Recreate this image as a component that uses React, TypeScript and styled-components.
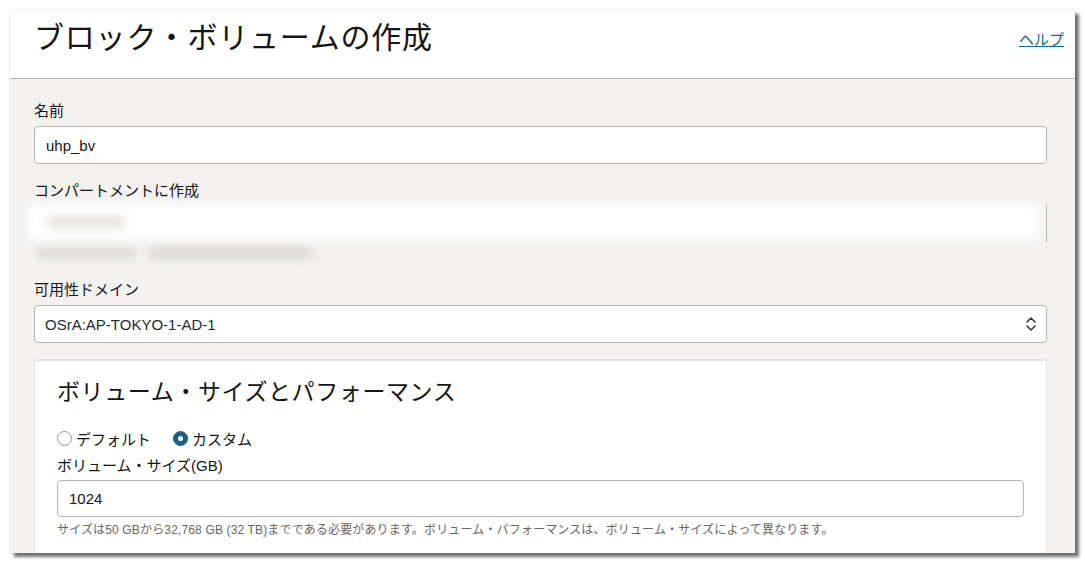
import * as React from "react";
import styled, { createGlobalStyle } from "styled-components";

const GlobalStyle = createGlobalStyle`
  html, body {
    margin: 0;
    padding: 0;
    background: #ffffff;
  }
  body {
    font-family: "Liberation Sans", "Noto Sans CJK JP", sans-serif;
    color: #161513;
  }
`;

const Page = styled.div`
  padding: 10px 0 0 10px;
  width: 1085px;
  height: 565px;
  box-sizing: border-box;
  overflow: hidden;
`;

const Window = styled.div`
  width: 1065px;
  height: 543px;
  background: #f3f2f1;
  overflow: hidden;
  box-shadow: 0 0 2px rgba(0, 0, 0, 0.18), 4px 4px 3px rgba(0, 0, 0, 0.55);
  display: flex;
  flex-direction: column;
`;

const Header = styled.header`
  height: 69px;
  flex: none;
  box-sizing: border-box;
  background: #ffffff;
  border-bottom: 1px solid #bcb8b2;
  display: flex;
  align-items: center;
  justify-content: space-between;
  padding: 0 11px 12px 24px;
`;

const Title = styled.h1`
  margin: 0;
  font-size: 30px;
  font-weight: 400;
  line-height: 36px;
  letter-spacing: 0.8px;
`;

const HelpLink = styled.a`
  font-size: 15px;
  color: #0f6a99;
  text-decoration: underline;
  cursor: pointer;
`;

const Body = styled.div`
  padding: 22px 28px 0 24px;
  display: flex;
  flex-direction: column;
`;

const Field = styled.div<{ $gap?: number }>`
  display: flex;
  flex-direction: column;
  gap: ${(p) => p.$gap ?? 5}px;
  margin-bottom: 17px;
`;

const Label = styled.label`
  font-size: 15px;
  line-height: 20px;
  color: #161513;
`;

const TextBox = styled.div<{ $height?: number }>`
  height: ${(p) => p.$height ?? 38}px;
  box-sizing: border-box;
  background: #ffffff;
  border: 1px solid #b9b5ae;
  border-radius: 4px;
  display: flex;
  align-items: center;
  justify-content: space-between;
  padding: 0 9px 0 11px;
  font-size: 15px;
  color: #161513;
`;

const SelectText = styled.span`
  color: #1f2b36;
  margin-left: -1px;
`;

const Redacted = styled.div`
  display: flex;
  align-items: flex-start;
  margin: 3px 0 0 -6px;
`;

const BlurArea = styled.div`
  flex: 1;
  display: flex;
  flex-direction: column;
  gap: 3px;
  filter: blur(5px);
`;

const BlurField = styled.div`
  height: 36px;
  background: #ffffff;
  display: flex;
  align-items: center;
  padding-left: 18px;
`;

const Blob = styled.span<{ $w: number; $tone?: string }>`
  display: inline-block;
  width: ${(p) => p.$w}px;
  height: 12px;
  border-radius: 6px;
  background: ${(p) => p.$tone ?? "#d8d6d3"};
`;

const BlurLine = styled.div`
  height: 20px;
  display: flex;
  align-items: center;
  gap: 12px;
  padding-left: 8px;
`;

const FieldEdge = styled.div`
  width: 1px;
  height: 37px;
  background: #b9b5ae;
  margin-top: 1px;
  margin-left: 7px;
`;

const Card = styled.section`
  margin-top: -1px;
  background: #ffffff;
  border-top: 2px solid #e2e2e5;
  border-left: 1px solid #e6e6e8;
  border-right: 1px solid #e6e6e8;
  padding: 17px 22px 0 22px;
  display: flex;
  flex-direction: column;
  height: 260px;
`;

const CardTitle = styled.h2`
  margin: 0;
  font-size: 23px;
  font-weight: 400;
  line-height: 28px;
  letter-spacing: 0.6px;
`;

const RadioRow = styled.div`
  display: flex;
  align-items: center;
  gap: 22px;
  margin-top: 22px;
  height: 20px;
`;

const RadioOption = styled.label`
  display: flex;
  align-items: center;
  gap: 4px;
  font-size: 15px;
  color: #161513;
`;

const RadioDot = styled.span<{ $checked?: boolean }>`
  width: 15px;
  height: 15px;
  box-sizing: border-box;
  border-radius: 50%;
  background: ${(p) => (p.$checked ? "#1d5f7e" : "#ffffff")};
  border: 1px solid ${(p) => (p.$checked ? "#1d5f7e" : "#9d9994")};
  display: flex;
  align-items: center;
  justify-content: center;

  &::after {
    content: "";
    display: ${(p) => (p.$checked ? "block" : "none")};
    width: 5px;
    height: 5px;
    border-radius: 50%;
    background: #ffffff;
  }
`;

const SizeField = styled.div`
  display: flex;
  flex-direction: column;
  gap: 4px;
  margin-top: 8px;
`;

const Hint = styled.p`
  margin: 5px 0 0;
  font-size: 12px;
  line-height: 16px;
  letter-spacing: 0.15px;
  color: #6b6661;
`;

const Chevrons = () => (
  <svg width="12" height="16" viewBox="0 0 12 16" fill="none">
    <path d="M2 6 L6 2 L10 6" stroke="#3a3836" strokeWidth="1.6" strokeLinecap="round" strokeLinejoin="round" />
    <path d="M2 10 L6 14 L10 10" stroke="#3a3836" strokeWidth="1.6" strokeLinecap="round" strokeLinejoin="round" />
  </svg>
);

const App = () => (
  <>
    <GlobalStyle />
    <Page>
      <Window>
        <Header>
          <Title>ブロック・ボリュームの作成</Title>
          <HelpLink>ヘルプ</HelpLink>
        </Header>
        <Body>
          <Field>
            <Label>名前</Label>
            <TextBox>uhp_bv</TextBox>
          </Field>

          <Field $gap={0}>
            <Label>コンパートメントに作成</Label>
            <Redacted>
              <BlurArea>
                <BlurField>
                  <Blob $w={80} $tone="#e4e2df" />
                </BlurField>
                <BlurLine>
                  <Blob $w={100} $tone="#dcdad7" />
                  <Blob $w={165} $tone="#d9d7d4" />
                </BlurLine>
              </BlurArea>
              <FieldEdge />
            </Redacted>
          </Field>

          <Field>
            <Label>可用性ドメイン</Label>
            <TextBox>
              <SelectText>OSrA:AP-TOKYO-1-AD-1</SelectText>
              <Chevrons />
            </TextBox>
          </Field>

          <Card>
            <CardTitle>ボリューム・サイズとパフォーマンス</CardTitle>
            <RadioRow>
              <RadioOption>
                <RadioDot />
                デフォルト
              </RadioOption>
              <RadioOption>
                <RadioDot $checked />
                カスタム
              </RadioOption>
            </RadioRow>
            <SizeField>
              <Label>ボリューム・サイズ(GB)</Label>
              <TextBox $height={37}>1024</TextBox>
            </SizeField>
            <Hint>
              サイズは50 GBから32,768 GB (32 TB)までである必要があります。ボリューム・パフォーマンスは、ボリューム・サイズによって異なります。
            </Hint>
          </Card>
        </Body>
      </Window>
    </Page>
  </>
);

export default App;
